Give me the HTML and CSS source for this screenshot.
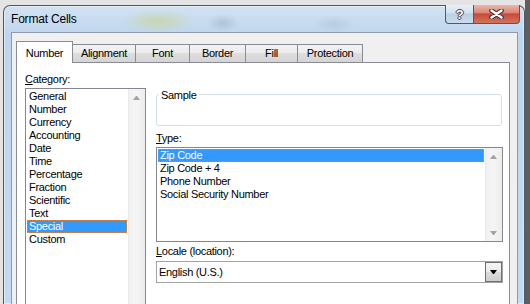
FILE: index.html
```html
<!DOCTYPE html>
<html lang="en">
<head>
    <meta charset="UTF-8">
    <meta name="viewport" content="width=device-width, initial-scale=1.0">
    <title>Format Cells</title>
    <link rel="stylesheet" href="styles.css">
</head>
<body>
    <div class="window">
        <div class="titlebar">
            <span class="title">Format Cells</span>
            <div class="caption-buttons">
                <div class="cap-btn help"><span>?</span></div>
                <div class="cap-btn close">
                    <svg width="15" height="10" viewBox="0 0 15 10">
                        <path d="M2.5 1.5 L12.5 8.5 M12.5 1.5 L2.5 8.5" stroke="#3a3a3a" stroke-width="4.6" stroke-linecap="round" fill="none"/>
                        <path d="M2.5 1.5 L12.5 8.5 M12.5 1.5 L2.5 8.5" stroke="#ffffff" stroke-width="2.4" stroke-linecap="round" fill="none"/>
                    </svg>
                </div>
            </div>
        </div>

        <div class="client">
            <div class="tabs">
                <div class="tab active w-number">Number</div>
                <div class="tab w-alignment">Alignment</div>
                <div class="tab w-font">Font</div>
                <div class="tab w-border">Border</div>
                <div class="tab w-fill">Fill</div>
                <div class="tab w-protection">Protection</div>
            </div>

            <div class="panel">
                <div class="left-col">
                    <div class="label"><u>C</u>ategory:</div>
                    <div class="listbox category">
                        <div class="items">
                            <div class="item">General</div>
                            <div class="item">Number</div>
                            <div class="item">Currency</div>
                            <div class="item">Accounting</div>
                            <div class="item">Date</div>
                            <div class="item">Time</div>
                            <div class="item">Percentage</div>
                            <div class="item">Fraction</div>
                            <div class="item">Scientific</div>
                            <div class="item">Text</div>
                            <div class="item selected">Special</div>
                            <div class="item">Custom</div>
                        </div>
                        <div class="scrollbar">
                            <span class="arrow up"></span>
                        </div>
                    </div>
                </div>

                <div class="right-col">
                    <div class="groupbox"><span class="legend">Sample</span></div>

                    <div class="label type-label"><u>T</u>ype:</div>
                    <div class="listbox type">
                        <div class="items">
                            <div class="item selected">Zip Code</div>
                            <div class="item">Zip Code + 4</div>
                            <div class="item">Phone Number</div>
                            <div class="item">Social Security Number</div>
                        </div>
                        <div class="scrollbar">
                            <span class="arrow up"></span>
                            <span class="arrow down"></span>
                        </div>
                    </div>

                    <div class="label locale-label"><u>L</u>ocale (location):</div>
                    <div class="combo">
                        <span class="combo-text">English (U.S.)</span>
                        <div class="drop"><span class="tri"></span></div>
                    </div>
                </div>
            </div>
        </div>
    </div>
</body>
</html>
```

FILE: styles.css
```css
body {
    margin: 0;
    width: 530px;
    height: 304px;
    overflow: hidden;
    background: linear-gradient(to right, #e4e4e4 0, #e4e4e4 525px, #5e5e5e 525px);
    font-family: "Liberation Sans", Arial, sans-serif;
    font-size: 11px;
    letter-spacing: -0.3px;
    color: #000;
}

/* window frame */
.window {
    margin: 5px 0 0 3px;
    width: 522px;
    height: 299px;
    box-sizing: border-box;
    border: 1px solid #4c5768;
    border-bottom: none;
    border-radius: 7px 7px 0 0;
    padding: 0 6px 0 7px;
    background:
        radial-gradient(ellipse 36px 12px at 154px 15px, rgba(200, 214, 168, 0.9), rgba(200, 214, 168, 0)),
        radial-gradient(ellipse 16px 9px at 219px 17px, rgba(140, 160, 180, 0.4), rgba(140, 160, 180, 0)),
        radial-gradient(ellipse 20px 9px at 330px 18px, rgba(150, 170, 195, 0.3), rgba(150, 170, 195, 0)),
        linear-gradient(#d2e2f2, #bed5ee 30px, #c3daf3);
    box-shadow: inset 0 0 0 1px rgba(255, 255, 255, 0.45);
}

.titlebar {
    display: flex;
    justify-content: space-between;
    align-items: flex-start;
    height: 26px;
}

.title {
    margin-top: 5px;
    font-size: 12px;
    line-height: 16px;
    letter-spacing: -0.2px;
    color: #000;
}

.caption-buttons {
    display: flex;
    margin-top: -1px;
    margin-right: -2px;
}

.cap-btn {
    height: 19px;
    box-sizing: border-box;
    border: 1px solid #4a5a70;
    border-top: none;
    display: flex;
    align-items: center;
    justify-content: center;
}

.help {
    width: 28px;
    border-right: none;
    border-radius: 0 0 0 4px;
    background: linear-gradient(#e8eff7, #d3e0ee 45%, #bccfe3 50%, #cadcef);
}

.help span {
    font-weight: bold;
    font-size: 13px;
    line-height: 13px;
    color: #fff;
    text-shadow: 1px 0 0 #3c4450, -1px 0 0 #3c4450, 0 1px 0 #3c4450, 0 -1px 0 #3c4450;
}

.close {
    width: 47px;
    border-radius: 0 0 4px 0;
    background: linear-gradient(#ecb5aa, #dc8877 42%, #c84a37 50%, #d5735c);
}

/* dialog body */
.client {
    height: 273px;
    box-sizing: border-box;
    border: 1px solid #8c9cae;
    border-bottom: none;
    background: #f0f0f0;
    padding: 8px 0 0 4px;
}

.tabs {
    display: flex;
    align-items: flex-end;
    height: 21px;
    position: relative;
    z-index: 1;
}

.tab {
    height: 18px;
    box-sizing: border-box;
    border: 1px solid #898c95;
    border-bottom: none;
    margin-right: -1px;
    padding-top: 2px;
    line-height: 13px;
    text-align: center;
    background: linear-gradient(#f3f3f3, #ebebeb 50%, #dedede 50%, #d4d4d4);
}

.tab.active {
    height: 22px;
    margin-bottom: -1px;
    padding-top: 5px;
    background: #fff;
    position: relative;
    z-index: 2;
}

.w-number { width: 57px; }
.w-alignment { width: 64px; }
.w-font { width: 55px; }
.w-border { width: 57px; }
.w-fill { width: 53px; }
.w-protection { width: 66px; }

.panel {
    width: 494px;
    height: 242px;
    box-sizing: border-box;
    border: 1px solid #898c95;
    border-bottom: none;
    background: #fff;
    display: flex;
    padding: 10px 0 0 8px;
}

.label {
    line-height: 13px;
    height: 13px;
}

.left-col {
    width: 121px;
}

.right-col {
    width: 347px;
    margin-left: 10px;
}

/* list boxes */
.listbox {
    display: flex;
    box-sizing: border-box;
    border: 1px solid #828790;
    background: #fff;
    margin-top: 2px;
}

.listbox.category {
    height: 216px;
    border-bottom: none;
}

.listbox.type {
    height: 95px;
}

.items {
    flex: 1;
    padding: 1px;
}

.item {
    height: 13px;
    line-height: 13px;
    padding-left: 2px;
    white-space: nowrap;
}

.item.selected {
    background: #3399ff;
    color: #fff;
    outline: 1px dotted #c98a4c;
    outline-offset: -1px;
}

.scrollbar {
    width: 17px;
    display: flex;
    flex-direction: column;
    justify-content: space-between;
    background: linear-gradient(to right, #e2e2e2 0, #f1f1f1 1px, #f5f5f5 50%, #ececec);
}

.arrow {
    height: 17px;
    display: flex;
    align-items: center;
    justify-content: center;
}

.arrow::after {
    content: "";
    width: 1px;
    height: 0;
    border-left: 3px solid transparent;
    border-right: 3px solid transparent;
}

.arrow.up::after {
    border-bottom: 4px solid #a3a3a3;
}

.arrow.down::after {
    border-top: 4px solid #a3a3a3;
}

/* sample group */
.groupbox {
    position: relative;
    margin-top: 21px;
    width: 346px;
    height: 32px;
    box-sizing: border-box;
    border: 1px solid #d5dfe5;
    border-radius: 3px;
}

.legend {
    position: absolute;
    left: 2px;
    top: -6px;
    padding: 0 2px;
    line-height: 13px;
    background: #fff;
}

.type-label {
    margin-top: 6px;
}

.locale-label {
    margin-top: 3px;
}

/* combo box */
.combo {
    margin-top: 3px;
    height: 22px;
    box-sizing: border-box;
    border: 1px solid #a3a3a3;
    display: flex;
    align-items: center;
    justify-content: space-between;
}

.combo-text {
    padding-left: 2px;
    line-height: 13px;
}

.drop {
    width: 17px;
    height: 20px;
    box-sizing: border-box;
    border: 1px solid #6f6f6f;
    background: linear-gradient(#f4f4f4, #ececec 50%, #dcdcdc 50%, #cfcfcf);
    display: flex;
    align-items: center;
    justify-content: center;
}

.tri {
    width: 1px;
    height: 0;
    border-left: 3px solid transparent;
    border-right: 3px solid transparent;
    border-top: 4px solid #000;
}
```
